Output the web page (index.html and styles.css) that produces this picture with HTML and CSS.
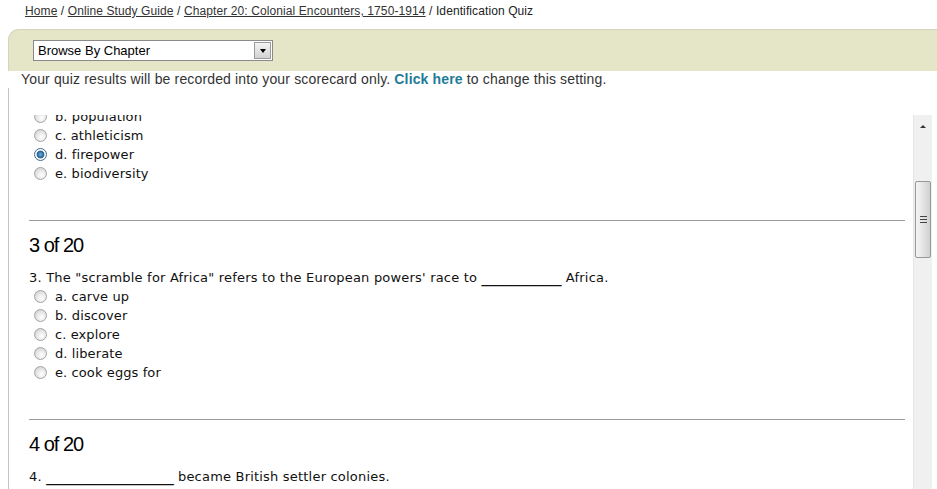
FILE: index.html
```html
<!DOCTYPE html>
<html>
<head>
<meta charset="utf-8">
<link rel="stylesheet" href="styles.css">
</head>
<body>
<div class="crumb"><a href="#">Home</a> / <a href="#">Online Study Guide</a> / <a href="#">Chapter 20: Colonial Encounters, 1750-1914</a> / Identification Quiz</div>
<div class="banner">
  <div class="select"><span class="select-text">Browse By Chapter</span><span class="select-btn"><span class="tri"></span></span></div>
</div>
<div class="msg">Your quiz results will be recorded into your scorecard only. <a href="#" class="click">Click here</a> to change this setting.</div>
<div class="main">
  <div class="viewport">
    <div class="content">
      <ul class="opts first">
        <li><span class="radio"></span>b. population</li>
        <li><span class="radio"></span>c. athleticism</li>
        <li><span class="radio on"></span>d. firepower</li>
        <li><span class="radio"></span>e. biodiversity</li>
      </ul>
      <hr class="rule">
      <h2 class="qnum">3 of 20</h2>
      <p class="q">3. The "scramble for Africa" refers to the European powers' race to <span class="blank">__________</span> Africa.</p>
      <ul class="opts">
        <li><span class="radio"></span>a. carve up</li>
        <li><span class="radio"></span>b. discover</li>
        <li><span class="radio"></span>c. explore</li>
        <li><span class="radio"></span>d. liberate</li>
        <li><span class="radio"></span>e. cook eggs for</li>
      </ul>
      <hr class="rule">
      <h2 class="qnum">4 of 20</h2>
      <p class="q">4. <span class="blank long">_______________</span> became British settler colonies.</p>
      <ul class="opts">
        <li><span class="radio"></span></li>
      </ul>
    </div>
  </div>
  <div class="scrollbar">
    <div class="arrow"><span class="up"></span></div>
    <div class="track-gap"></div>
    <div class="thumb"><span class="grip"></span><span class="grip"></span><span class="grip"></span></div>
    <div class="track-rest"></div>
  </div>
</div>
</body>
</html>
```
FILE: styles.css
```css
html, body {
  margin: 0;
  padding: 0;
  background: #fff;
  overflow: hidden;
}
body {
  width: 937px;
  height: 489px;
  font-family: "Liberation Sans", Arial, sans-serif;
  color: #333;
}
.crumb {
  height: 22px;
  line-height: 22px;
  padding-left: 25px;
  font-size: 12px;
  color: #222;
  letter-spacing: 0.1px;
}
.crumb a {
  color: #333;
  text-decoration: underline;
}
.banner {
  margin-top: 7px;
  margin-left: 8px;
  height: 42px;
  box-sizing: border-box;
  padding-top: 10px;
  padding-left: 24px;
  background: #e5e5c7;
  border-top: 1px solid #d4d4c0;
  border-left: 1px solid #d4d4c0;
  border-top-left-radius: 11px;
}
.select {
  width: 240px;
  height: 21px;
  box-sizing: border-box;
  border: 1px solid #8a8a8a;
  background: #fff;
  display: flex;
  align-items: stretch;
}
.select-text {
  flex: 1;
  font-size: 13px;
  line-height: 19px;
  padding-left: 4px;
  color: #000;
}
.select-btn {
  width: 15px;
  margin: 1px;
  border: 1px solid #9a9a9a;
  background: linear-gradient(#f4f4f4, #d2d2d2);
  display: flex;
  align-items: center;
  justify-content: center;
}
.tri {
  width: 0;
  height: 0;
  border-left: 3.5px solid transparent;
  border-right: 3.5px solid transparent;
  border-top: 4px solid #000;
  margin-top: 1px;
}
.msg {
  height: 17px;
  line-height: 17px;
  padding-left: 21px;
  font-size: 14px;
  letter-spacing: 0.15px;
  color: #333;
}
.click {
  color: #1e7c98;
  font-weight: bold;
  text-decoration: none;
}
.main {
  margin-left: 8px;
  height: 401px;
  box-sizing: border-box;
  border-left: 1px solid #c4c4c4;
  padding-top: 27px;
  padding-right: 5px;
  display: flex;
}
.viewport {
  flex: 1;
  overflow: hidden;
}
.content {
  padding-left: 20px;
  padding-right: 8px;
  font-family: "DejaVu Sans", Verdana, sans-serif;
  font-size: 13px;
  letter-spacing: 0.1px;
  color: #111;
}
.opts {
  list-style: none;
  margin: 0;
  padding: 0 0 0 5px;
}
.opts.first {
  margin-top: -8px;
}
.opts li {
  height: 19px;
  line-height: 19px;
  display: flex;
  align-items: center;
}
.radio {
  width: 11px;
  height: 11px;
  border: 1px solid #a4a4a4;
  border-radius: 50%;
  background: radial-gradient(circle at 60% 65%, #ffffff 0, #eeeeee 35%, #c9c9c9 100%);
  margin-right: 8px;
  flex: none;
}
.radio.on {
  border-color: #4a6d8a;
  background: radial-gradient(circle at 50% 50%, #6fb0e0 0, #1f5e92 45%, #ffffff 55%, #e0e0e0 100%);
}
.rule {
  margin: 37px 0 0 0;
  height: 0;
  border: 0;
  border-top: 1px solid #9c9c9c;
}
.qnum {
  margin: 13px 0 0 0;
  font-family: "Liberation Sans", Arial, sans-serif;
  font-weight: normal;
  font-size: 20px;
  letter-spacing: -1px;
  line-height: 22px;
  color: #000;
}
.q {
  margin: 12px 0 0 0;
  height: 19px;
  line-height: 19px;
  letter-spacing: 0.2px;
}
.blank {
  font-size: 16px;
  letter-spacing: 0;
  line-height: 1;
}
.blank.long {
  font-size: 17px;
}
.scrollbar {
  width: 18px;
  display: flex;
  flex-direction: column;
  background: #f0f0f0;
  border-left: 1px solid #e6e6e6;
}
.arrow {
  height: 22px;
  display: flex;
  align-items: center;
  justify-content: center;
}
.up {
  width: 0;
  height: 0;
  border-left: 3px solid transparent;
  border-right: 3px solid transparent;
  border-bottom: 3px solid #333;
}
.track-gap {
  height: 44px;
}
.thumb {
  height: 77px;
  margin: 0 1px;
  box-sizing: border-box;
  border: 1px solid #979797;
  border-radius: 2px;
  background: linear-gradient(90deg, #f6f6f6, #e4e4e4 50%, #d0d0d0);
  display: flex;
  flex-direction: column;
  align-items: center;
  justify-content: center;
  gap: 2px;
}
.grip {
  width: 7px;
  height: 1px;
  background: #444;
}
.track-rest {
  flex: 1;
}
```
